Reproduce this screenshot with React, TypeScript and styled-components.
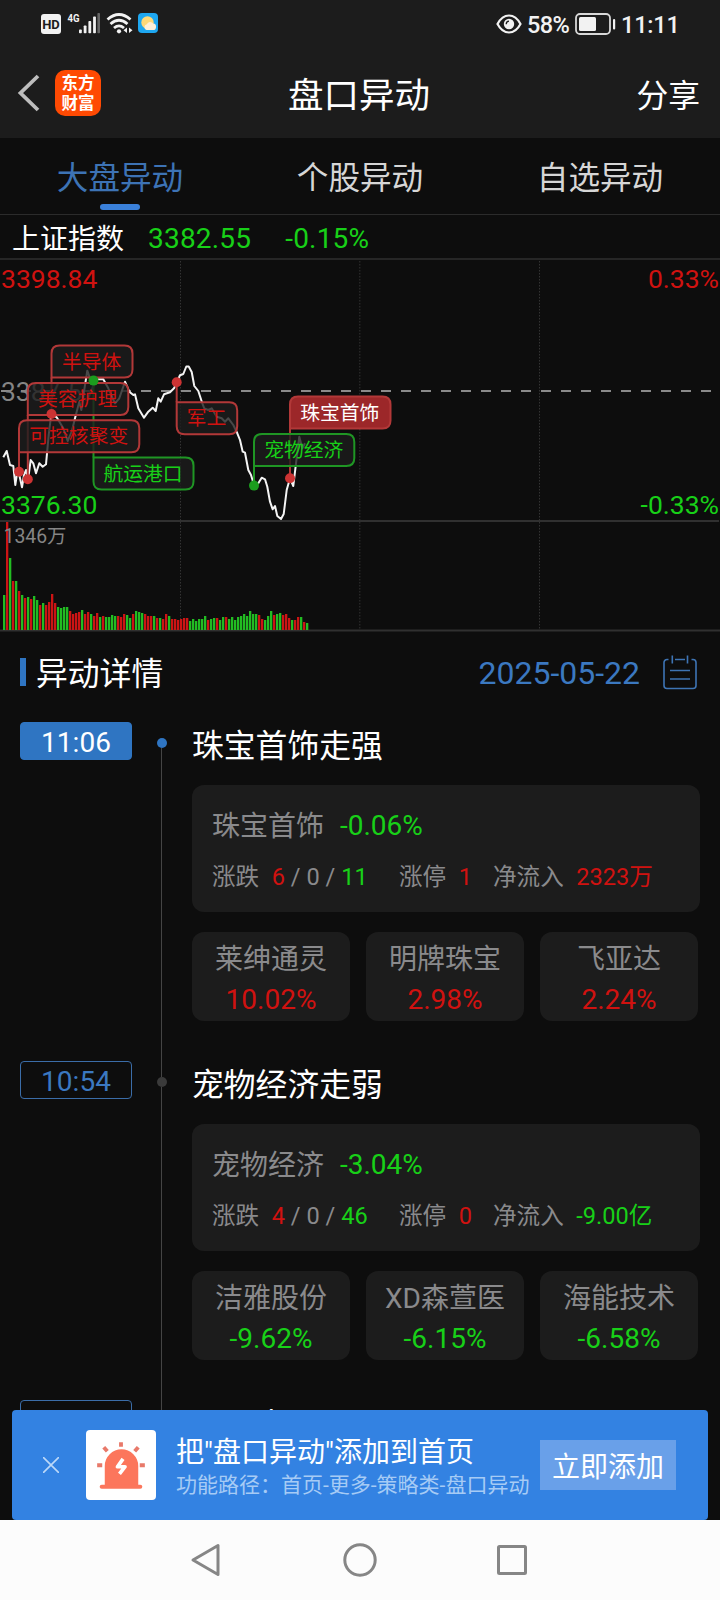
import React from "react";
import styled, { createGlobalStyle } from "styled-components";

const RED = "#d01210";
const GREEN = "#18d018";
const BLUE = "#2f75c2";

const GlobalStyle = createGlobalStyle`
  * { box-sizing: border-box; }
  body {
    margin: 0;
    background: #0d0d0d;
    font-family: Roboto, "Noto Sans CJK SC", sans-serif;
    color: #fff;
  }
`;

type Tone = "up" | "down";
const toneColor = (t?: Tone) => (t === "up" ? RED : t === "down" ? GREEN : "inherit");

const Phone = styled.div`
  width: 720px;
  height: 1600px;
  display: flex;
  flex-direction: column;
  overflow: hidden;
  background: #0d0d0d;
`;

const Header = styled.header`
  height: 138px;
  flex: none;
  background: #1c1c1c;
`;

const StatusBar = styled.div`
  height: 48px;
  padding: 0 42px 0 40px;
  display: flex;
  align-items: center;
  justify-content: space-between;
  color: #f2f2f2;
`;

const StatusGroup = styled.div`
  display: flex;
  align-items: center;
  svg { display: block; }
`;

const Percent = styled.span`
  width: 53px;
  padding-left: 5px;
  font-size: 23.5px;
  font-weight: 500;
  line-height: 28px;
  letter-spacing: -0.6px;
  margin-top: 2px;
`;

const Clock = styled(Percent)`
  width: 62px;
  letter-spacing: -0.2px;
`;

const TitleBar = styled.div`
  height: 90px;
  padding: 0 20px 3px 17px;
  display: grid;
  grid-template-columns: 1fr auto 1fr;
  align-items: center;
`;

const TitleLeft = styled.div`
  display: flex;
  align-items: center;
  gap: 15px;
  padding-top: 3px;
`;

const Logo = styled.div`
  width: 46px;
  height: 46px;
  border-radius: 10px;
  background: #ff4a03;
  font-family: "Noto Sans CJK SC", sans-serif;
  font-weight: 700;
  font-size: 16.5px;
  line-height: 20px;
  padding-top: 2px;
  text-align: center;
`;

const PageTitle = styled.h1`
  margin: 8px 0 0;
  padding-left: 1px;
  font-size: 35.5px;
  line-height: 44px;
  font-weight: 400;
`;

const Share = styled.div`
  justify-self: end;
  font-size: 31.8px;
  line-height: 40px;
  margin-top: 8px;
`;

const Tabs = styled.nav`
  height: 77px;
  flex: none;
  display: grid;
  grid-template-columns: repeat(3, 1fr);
  border-bottom: 1px solid #2b2b2b;
`;

const Tab = styled.div<{ $active?: boolean }>`
  display: flex;
  flex-direction: column;
  align-items: center;
  padding-top: 19px;
  font-size: 31.6px;
  line-height: 44px;
  color: ${(p) => (p.$active ? "#3d73b5" : "#d6d6d6")};
  &::after {
    content: "";
    width: 40px;
    height: 6px;
    margin-top: 3px;
    border-radius: 3px;
    background: ${(p) => (p.$active ? "#3a80d9" : "transparent")};
  }
`;

const IndexRow = styled.div`
  height: 43px;
  flex: none;
  padding: 5px 0 0 12px;
  display: flex;
  align-items: center;
  font-size: 28px;
  line-height: 38px;
`;

const IndexName = styled.span`
  padding-top: 1px;
`;

const IndexValue = styled.span`
  color: ${GREEN};
  letter-spacing: 0.2px;
  margin-left: 24px;
  & + & { margin-left: 34px; }
`;

const ChartArea = styled.div`
  height: 374px;
  flex: none;
  svg { display: block; }
`;

const Content = styled.main`
  flex: 1;
  min-height: 0;
  overflow: hidden;
`;

const SectionHead = styled.div`
  height: 90px;
  padding: 0 23px 10px 20px;
  display: flex;
  align-items: center;
`;

const Marker = styled.span`
  width: 6px;
  height: 28px;
  background: ${BLUE};
`;

const SectionTitle = styled.h2`
  margin: 3px auto 0 10px;
  font-size: 31.8px;
  line-height: 40px;
  font-weight: 400;
`;

const DateText = styled.span`
  margin: 1px 23px 0 0;
  font-size: 32px;
  line-height: 40px;
  color: #3b78c0;
`;

const Item = styled.article`
  height: 339px;
  display: grid;
  grid-template-columns: 112px 60px 508px;
  padding-left: 20px;
`;

const TimeBadge = styled.div<{ $active?: boolean }>`
  height: 38px;
  padding-top: 2px;
  border: 1px solid ${(p) => (p.$active ? BLUE : "#3b6da8")};
  border-radius: 4px;
  background: ${(p) => (p.$active ? BLUE : "transparent")};
  color: ${(p) => (p.$active ? "#fff" : "#3b78c0")};
  font-size: 28px;
  letter-spacing: 0.1px;
  line-height: 36px;
  text-align: center;
`;

const Rail = styled.div<{ $first?: boolean }>`
  display: flex;
  flex-direction: column;
  align-items: center;
  &::before {
    content: "";
    width: 1px;
    height: 16px;
    margin-right: 1px;
    background: ${(p) => (p.$first ? "transparent" : "#444")};
  }
  &::after {
    content: "";
    width: 1px;
    flex: 1;
    margin-right: 1px;
    background: #444;
  }
`;

const Dot = styled.span<{ $active?: boolean }>`
  width: 10px;
  height: 10px;
  border-radius: 5px;
  background: ${(p) => (p.$active ? BLUE : "#3a3a3a")};
`;

const ItemTitle = styled.h3<{ $last?: boolean }>`
  margin: ${(p) => (p.$last ? 4 : 3)}px 0 0;
  height: 60px;
  font-size: 31.8px;
  line-height: 42px;
  font-weight: 400;
`;

const Card = styled.section`
  height: 127px;
  padding: 20px 20px 0;
  border-radius: 12px;
  background: #1c1c1c;
  color: #8a8a8c;
`;

const CardHead = styled.div`
  display: flex;
  gap: 16px;
  height: 52px;
  font-size: 28px;
  line-height: 42px;
`;

const SectorName = styled.span`
  line-height: 44px;
`;

const Stats = styled.div`
  display: grid;
  grid-template-columns: 187px 94px auto;
  font-size: 23.6px;
  line-height: 40px;
`;

const Stat = styled.div`
  display: flex;
  gap: 12.5px;
  white-space: pre;
`;

const Num = styled.span<{ $tone?: Tone }>`
  color: ${(p) => toneColor(p.$tone)};
`;

const Stocks = styled.div`
  display: grid;
  grid-template-columns: repeat(3, 158px);
  gap: 16px;
  margin-top: 20px;
`;

const Stock = styled.div`
  height: 89px;
  padding-top: 7px;
  border-radius: 12px;
  background: #1c1c1c;
  color: #8a8a8c;
  font-size: 28px;
  line-height: 40px;
  text-align: center;
  display: flex;
  flex-direction: column;
`;

const StockName = styled.span`
  height: 41px;
  line-height: 42px;
`;

const Banner = styled.aside`
  flex: none;
  height: 110px;
  margin: 0 12px;
  padding: 0 32px 0 31px;
  border-radius: 4px;
  background: #3382e2;
  display: flex;
  align-items: center;
`;

const AlarmTile = styled.div`
  width: 70px;
  height: 70px;
  margin: 0 20px 0 27px;
  border-radius: 4px;
  background: #fff;
`;

const BannerText = styled.div`
  flex: 1;
  white-space: nowrap;
  padding-top: 5px;
`;

const BannerTitle = styled.div`
  font-size: 28px;
  line-height: 36px;
`;

const BannerPath = styled.div`
  font-size: 21px;
  line-height: 29px;
  color: #a6cbf5;
`;

const AddButton = styled.button`
  width: 136px;
  height: 50px;
  padding: 6px 0 0;
  border: 0;
  background: #69a0e9;
  color: #fff;
  font: inherit;
  font-size: 28px;
  line-height: 44px;
`;

const SystemNav = styled.footer`
  flex: none;
  height: 80px;
  padding-right: 4px;
  background: #fcfcfc;
  display: flex;
  justify-content: center;
  align-items: center;
  gap: 116px;
`;

const PRICE: [number, number][] = [
  [3.3, 457.3], [6.7, 451], [10, 465], [13.3, 466], [15.3, 485], [17.3, 471.7], [19.3, 475], [22, 487.3],
  [24, 475], [26, 470], [28, 480], [30.7, 460], [33.3, 463.3], [36, 473.3], [39.3, 463.3], [42.7, 466.7],
  [46, 464.3], [48.7, 435], [51.3, 414], [56.7, 417.3], [63.3, 428.3], [67.7, 441], [71.7, 431.7],
  [75, 418.3], [79.3, 401.7], [81.3, 410], [84, 391.7], [87.3, 370.7], [90, 378.3], [93.3, 380.7],
  [96.7, 379.3], [103.3, 379.3], [108.3, 388.3], [115, 403.3], [119.3, 398.3], [125, 381.7],
  [129.3, 391.7], [133.3, 395], [135, 394.3], [138.3, 408.3], [144, 417.7], [148.3, 411.7],
  [152.7, 407.7], [155.7, 411], [158.3, 398.3], [160.7, 401.7], [164, 394.3], [170, 392.3], [174, 388.3],
  [176.7, 382.3], [180, 375.3], [183.3, 374], [186.3, 366.5], [188.7, 366.5], [191.7, 372], [194.3, 386],
  [198.3, 391], [202.3, 403.3], [204.3, 408.3], [208.3, 410], [211.7, 408.3], [216.7, 416.7],
  [221.7, 418.3], [225, 421.7], [228.3, 418.3], [233.3, 425], [237.3, 433.3], [240, 440], [242.7, 451.7],
  [245, 452.7], [248.3, 470], [251, 475], [254, 485], [258.3, 483.3], [261.7, 477.7], [265, 479.3],
  [267.3, 486.7], [270, 501.7], [272.7, 509.3], [275, 506], [277.3, 516], [281, 519], [283.7, 514],
  [286.7, 490], [290, 478.3], [293.3, 486], [296, 463.3], [299.3, 436.7], [302.3, 448.3], [305, 443.3],
];

const VOLUME =
  "35g 108r 72g 49r 49g 39r 35g 32r 33g 31r 34g 30g 25r 27g 25r 28r 36r 27r 23g 22g 23g 23g 19r 16r 17r 18r 20g 16r 18r 16g 14r 17r 13g 14r 13g 13g 15g 14g 14r 13r 16r 15g 12g 16r 19g 18g 17g 16r 14r 14r 14g 12r 12g 11r 16r 14g 11r 11r 10r 11r 12r 12r 9g 11g 9g 11g 11g 14g 10r 11g 12g 12r 10g 13g 13r 11g 13g 10g 13g 14g 16g 14g 19g 16g 16g 15r 11r 10g 14g 19g 15r 16g 17g 15r 16r 12r 10g 10r 13r 13g 8r 7g".split(
    " "
  );

type Flag = { name: string; x: number; y: number; w: number; dotY: number; tone: Tone; solid?: boolean };

const FLAGS: Flag[] = [
  { name: "半导体", x: 51.5, y: 345.5, w: 81, dotY: 414, tone: "up" },
  { name: "航运港口", x: 93.5, y: 457.5, w: 100, dotY: 380.6, tone: "down" },
  { name: "美容护理", x: 27.8, y: 383, w: 100.5, dotY: 479.3, tone: "up" },
  { name: "可控核聚变", x: 19, y: 420.3, w: 120.3, dotY: 471.8, tone: "up" },
  { name: "军工", x: 176.7, y: 402.3, w: 60.5, dotY: 382.3, tone: "up" },
  { name: "珠宝首饰", x: 290, y: 396.5, w: 100.5, dotY: 478.3, tone: "up", solid: true },
  { name: "宠物经济", x: 254, y: 434, w: 100.3, dotY: 485.6, tone: "down" },
];

const FLAG_H = 32;
const FLAG_R = 8;

const flagPath = ({ x, y, w }: Flag) => {
  const r = FLAG_R;
  const b = y + FLAG_H;
  return [
    `M${x} ${y + r}Q${x} ${y} ${x + r} ${y}`,
    `H${x + w - r}Q${x + w} ${y} ${x + w} ${y + r}`,
    `V${b - r}Q${x + w} ${b} ${x + w - r} ${b}`,
    `H${x + r}Q${x} ${b} ${x} ${b - r}Z`,
  ].join("");
};

// The corner that touches the leader line is square.
const flagPathFor = (f: Flag) => {
  const r = FLAG_R;
  const b = f.y + FLAG_H;
  return f.dotY > f.y
    ? flagPath(f).replace(`H${f.x + r}Q${f.x} ${b} ${f.x} ${b - r}Z`, `H${f.x}Z`)
    : flagPath(f).replace(`M${f.x} ${f.y + r}Q${f.x} ${f.y} ${f.x + r} ${f.y}`, `M${f.x} ${f.y}`);
};

const FlagMark = ({ flag }: { flag: Flag }) => {
  const up = flag.tone === "up";
  const stroke = up ? "#b23838" : "#1f9624";
  const fill = flag.solid ? "#9c2729" : "rgba(29,29,29,0.8)";
  const edge = flag.dotY > flag.y ? flag.y + FLAG_H : flag.y;
  return (
    <g>
      <line x1={flag.x} x2={flag.x} y1={edge} y2={flag.dotY} stroke={stroke} strokeWidth={2} />
      <path d={flagPathFor(flag)} fill={fill} stroke={stroke} strokeWidth={2} />
      <text
        x={flag.x + flag.w / 2 - 0.4}
        y={flag.y + 23}
        textAnchor="middle"
        fontSize={19.8}
        fill={flag.solid ? "#fff" : up ? RED : GREEN}
      >
        {flag.name}
      </text>
    </g>
  );
};

const Chart = () => (
  <svg width="720" height="374" viewBox="0 258 720 374">
    <g stroke="#262626" strokeWidth="2">
      <line x1="0" x2="720" y1="259" y2="259" />
      <line x1="0" x2="719" y1="521" y2="521" stroke="#303030" />
      <line x1="0" x2="720" y1="630.5" y2="630.5" stroke="#303030" />
    </g>
    {[180.5, 359.8, 539.5].map((x) => (
      <line key={x} x1={x} x2={x} y1="261" y2="630" stroke="#333" strokeWidth="1" strokeDasharray="1.5 1.5" />
    ))}
    <line x1="1" x2="712" y1="391" y2="391" stroke="#8a8a8a" strokeWidth="2" strokeDasharray="10 10" />
    <text x="1" y="400.5" fontSize="26.4" fill="#858585">3387.57</text>
    <polyline
      points={PRICE.map((p) => p.join(",")).join(" ")}
      fill="none"
      stroke="#f4f4f4"
      strokeWidth="2"
      strokeLinejoin="round"
    />
    {FLAGS.map((f) => (
      <FlagMark key={f.name} flag={f} />
    ))}
    {FLAGS.map((f) => (
      <circle key={f.name} cx={f.x} cy={f.dotY} r="5" fill={f.tone === "up" ? "#cc3333" : "#1b9c1e"} />
    ))}
    <g fontSize="26.5">
      <text x="1" y="288" fill={RED}>3398.84</text>
      <text x="1" y="514" fill={GREEN}>3376.30</text>
      <text x="719" y="288" fill={RED} textAnchor="end">0.33%</text>
      <text x="719" y="514" fill={GREEN} textAnchor="end">-0.33%</text>
    </g>
    {VOLUME.map((v, i) => {
      const h = parseInt(v, 10);
      return (
        <rect key={i} x={3 + i * 3} y={630 - h} width="2.3" height={h} fill={v.endsWith("r") ? "#cc1414" : "#22bc22"} />
      );
    })}
    <text x="3.5" y="543" fontSize="19.4" fill="#858585">1346万</text>
  </svg>
);

const SignalIcons = () => (
  <svg width="120" height="24" viewBox="40 13 120 24">
    <rect x="41" y="15" width="20" height="20" rx="3" fill="#f2f2f2" />
    <text x="51" y="29.5" fontSize="13" fontWeight="700" textAnchor="middle" fill="#1c1c1c">HD</text>
    <text x="67.5" y="23" fontSize="11.5" fontWeight="700" textLength="12" lengthAdjust="spacingAndGlyphs" fill="#f2f2f2">4G</text>
    <g fill="#f2f2f2">
      <rect x="79" y="30.5" width="2.8" height="3.8" rx="0.8" />
      <rect x="83.7" y="26.5" width="2.8" height="7.8" rx="0.8" />
      <rect x="88.4" y="22" width="2.8" height="12.3" rx="0.8" />
      <rect x="93.1" y="17.5" width="2.8" height="16.8" rx="0.8" />
      <rect x="97.4" y="14" width="2.6" height="20.3" rx="0.8" fill="#666" />
    </g>
    <g fill="none" stroke="#f2f2f2" strokeWidth="2.8">
      <path d="M107.5 20.5Q119 10.5 130.5 20.5" />
      <path d="M110.5 25Q119 17.5 127.5 25" />
      <path d="M114 29Q119 24.8 124 29" />
    </g>
    <circle cx="119" cy="32.3" r="2.1" fill="#f2f2f2" />
    <path d="M127 28.5V34L123.5 31.2ZM129 28.5V34L132.5 31.2Z" fill="#f2f2f2" />
    <rect x="138" y="14" width="20" height="20" rx="4" fill="#1ea7f0" />
    <circle cx="147.5" cy="23.5" r="6.2" fill="#ffd978" />
    <path d="M146.5 31a3 3 0 0 1 .3-5.8a3.6 3.6 0 0 1 6.4-.6a3.2 3.2 0 0 1-.7 6.4Z" fill="#fff0d8" />
  </svg>
);

const EyeIcon = () => (
  <svg width="26" height="20" viewBox="0 0 26 20">
    <path d="M1.5 10Q6 1.5 13 1.5T24.5 10Q20 18.5 13 18.5T1.5 10Z" fill="none" stroke="#f2f2f2" strokeWidth="2.2" />
    <circle cx="13" cy="10" r="5.2" fill="#f2f2f2" />
    <path d="M10.2 10.2A3 3 0 0 1 13 7.2" fill="none" stroke="#1c1c1c" strokeWidth="1.3" />
  </svg>
);

const BatteryIcon = () => (
  <svg width="41" height="22" viewBox="0 0 41 22">
    <rect x="1" y="1" width="34" height="20" rx="4" fill="none" stroke="#d8d8d8" strokeWidth="1.8" />
    <rect x="4" y="4" width="17" height="14" rx="1.5" fill="#f2f2f2" />
    <rect x="38" y="6" width="2.2" height="10.5" rx="1" fill="#f2f2f2" />
  </svg>
);

const BackIcon = () => (
  <svg width="23" height="38" viewBox="0 0 23 38">
    <path d="M21 2L3.5 19L21 36" fill="none" stroke="#bdbdbd" strokeWidth="3.8" />
  </svg>
);

const CalendarIcon = () => (
  <svg width="34" height="35" viewBox="0 0 34 35" fill="none" stroke="#3e74b4" strokeWidth="1.6">
    <path d="M5.5 4.5H4A3 3 0 0 0 1 7.5V30.5A3 3 0 0 0 4 33.5H30A3 3 0 0 0 33 30.5V7.5A3 3 0 0 0 30 4.5H28.5M12 4.5H22" />
    <path d="M9.3 .5V8.5M24.5 .5V8.5M7 15.5H27M7 24H27" />
  </svg>
);

const CloseIcon = () => (
  <svg width="16" height="16" viewBox="0 0 16 16">
    <path d="M0 0L16 16M16 0L0 16" stroke="#bcd8f8" strokeWidth="1.6" />
  </svg>
);

const AlarmIcon = () => (
  <svg width="70" height="70" viewBox="0 0 69 69">
    <path d="M18.5 55V35.5a16.5 16.5 0 0 1 33 0V55Z" fill="#fc765c" />
    <rect x="13.5" y="54" width="42" height="4" rx="2" fill="#fc765c" />
    <path d="M34.5 12v4.5M17.5 17l3.5 4M51.5 17L48 21M11 34.7h5M53 34.7h5" stroke="#e8796a" strokeWidth="3.8" />
    <path d="M36.5 28.5L31 36.2H38.5L33 43.3" fill="none" stroke="#fff" strokeWidth="3.6" strokeLinejoin="round" />
  </svg>
);

type Alert = {
  time: string;
  title: string;
  sector: string;
  change: string;
  rise: number;
  flat: number;
  fall: number;
  limit: number;
  flow: string;
  flowTone: Tone;
  stocks: [string, string, Tone][];
};

const ALERTS: Alert[] = [
  {
    time: "11:06", title: "珠宝首饰走强", sector: "珠宝首饰", change: "-0.06%",
    rise: 6, flat: 0, fall: 11, limit: 1, flow: "2323万", flowTone: "up",
    stocks: [["莱绅通灵", "10.02%", "up"], ["明牌珠宝", "2.98%", "up"], ["飞亚达", "2.24%", "up"]],
  },
  {
    time: "10:54", title: "宠物经济走弱", sector: "宠物经济", change: "-3.04%",
    rise: 4, flat: 0, fall: 46, limit: 0, flow: "-9.00亿", flowTone: "down",
    stocks: [["洁雅股份", "-9.62%", "down"], ["XD森萱医", "-6.15%", "down"], ["海能技术", "-6.58%", "down"]],
  },
];

const AlertItem = ({ a, first }: { a: Alert; first: boolean }) => (
  <Item>
    <TimeBadge $active={first}>{a.time}</TimeBadge>
    <Rail $first={first}>
      <Dot $active={first} />
    </Rail>
    <div>
      <ItemTitle>{a.title}</ItemTitle>
      <Card>
        <CardHead>
          <SectorName>{a.sector}</SectorName>
          <Num $tone="down">{a.change}</Num>
        </CardHead>
        <Stats>
          <Stat>
            <span>涨跌</span>
            <span>
              <Num $tone="up">{a.rise}</Num> / {a.flat} / <Num $tone="down">{a.fall}</Num>
            </span>
          </Stat>
          <Stat>
            <span>涨停</span>
            <Num $tone="up">{a.limit}</Num>
          </Stat>
          <Stat>
            <span>净流入</span>
            <Num $tone={a.flowTone}>{a.flow}</Num>
          </Stat>
        </Stats>
      </Card>
      <Stocks>
        {a.stocks.map(([name, pct, tone]) => (
          <Stock key={name}>
            <StockName>{name}</StockName>
            <Num $tone={tone}>{pct}</Num>
          </Stock>
        ))}
      </Stocks>
    </div>
  </Item>
);

export default function App() {
  return (
    <Phone>
      <GlobalStyle />
      <Header>
        <StatusBar>
          <StatusGroup>
            <SignalIcons />
          </StatusGroup>
          <StatusGroup>
            <EyeIcon />
            <Percent>58%</Percent>
            <BatteryIcon />
            <Clock>11:11</Clock>
          </StatusGroup>
        </StatusBar>
        <TitleBar>
          <TitleLeft>
            <BackIcon />
            <Logo>东方<br />财富</Logo>
          </TitleLeft>
          <PageTitle>盘口异动</PageTitle>
          <Share>分享</Share>
        </TitleBar>
      </Header>
      <Tabs>
        <Tab $active>大盘异动</Tab>
        <Tab>个股异动</Tab>
        <Tab>自选异动</Tab>
      </Tabs>
      <IndexRow>
        <IndexName>上证指数</IndexName>
        <IndexValue>3382.55</IndexValue>
        <IndexValue>-0.15%</IndexValue>
      </IndexRow>
      <ChartArea>
        <Chart />
      </ChartArea>
      <Content>
        <SectionHead>
          <Marker />
          <SectionTitle>异动详情</SectionTitle>
          <DateText>2025-05-22</DateText>
          <CalendarIcon />
        </SectionHead>
        {ALERTS.map((a, i) => (
          <AlertItem key={a.time} a={a} first={i === 0} />
        ))}
        <Item>
          <TimeBadge>10:29</TimeBadge>
          <Rail>
            <Dot />
          </Rail>
          <ItemTitle $last>军工走强</ItemTitle>
        </Item>
      </Content>
      <Banner>
        <CloseIcon />
        <AlarmTile>
          <AlarmIcon />
        </AlarmTile>
        <BannerText>
          <BannerTitle>把"盘口异动"添加到首页</BannerTitle>
          <BannerPath>功能路径：首页-更多-策略类-盘口异动</BannerPath>
        </BannerText>
        <AddButton>立即添加</AddButton>
      </Banner>
      <SystemNav>
        <svg width="40" height="40" viewBox="0 0 40 40">
          <path d="M7 20L32 5.5V34.5Z" fill="none" stroke="#868686" strokeWidth="3" strokeLinejoin="round" />
        </svg>
        <svg width="36" height="40" viewBox="0 0 36 40">
          <circle cx="18" cy="20" r="15.2" fill="none" stroke="#868686" strokeWidth="3" />
        </svg>
        <svg width="36" height="40" viewBox="0 0 36 40">
          <rect x="4.5" y="6.5" width="27" height="27" rx="1" fill="none" stroke="#868686" strokeWidth="3" />
        </svg>
      </SystemNav>
    </Phone>
  );
}
